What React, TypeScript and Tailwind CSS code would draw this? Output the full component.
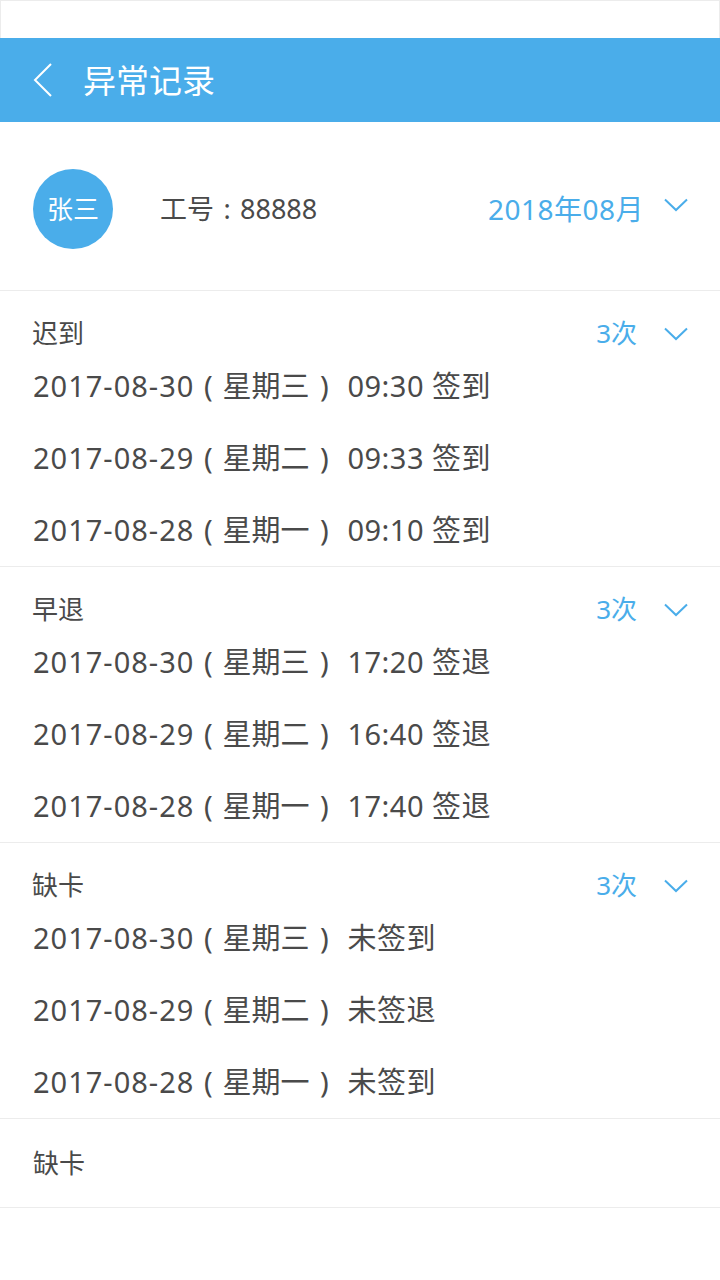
import React from "react";

const font = { fontFamily: '"Noto Sans", "Noto Sans CJK SC", sans-serif' };

type Item = { date: string; week: string; tail: string };
type Section = { title: string; count: string; items: Item[] };

const sections: Section[] = [
  {
    title: "迟到",
    count: "3次",
    items: [
      { date: "2017-08-30", week: "星期三", tail: "09:30 签到" },
      { date: "2017-08-29", week: "星期二", tail: "09:33 签到" },
      { date: "2017-08-28", week: "星期一", tail: "09:10 签到" },
    ],
  },
  {
    title: "早退",
    count: "3次",
    items: [
      { date: "2017-08-30", week: "星期三", tail: "17:20 签退" },
      { date: "2017-08-29", week: "星期二", tail: "16:40 签退" },
      { date: "2017-08-28", week: "星期一", tail: "17:40 签退" },
    ],
  },
  {
    title: "缺卡",
    count: "3次",
    items: [
      { date: "2017-08-30", week: "星期三", tail: "未签到" },
      { date: "2017-08-29", week: "星期二", tail: "未签退" },
      { date: "2017-08-28", week: "星期一", tail: "未签到" },
    ],
  },
];

function Chevron() {
  return (
    <svg width="24" height="14" viewBox="0 0 24 14" fill="none" className="shrink-0">
      <polyline points="1,1.5 12,12 23,1.5" stroke="#4aadea" strokeWidth="2" />
    </svg>
  );
}

export default function App() {
  return (
    <div className="w-[720px] min-h-[1280px] bg-white text-[#4a4a4a]" style={font}>
      {/* status strip */}
      <div className="h-[38px] border-t border-l border-r border-[#ececec]" />

      {/* title bar */}
      <div className="h-[84px] bg-[#4aadea] flex items-center pl-[33px]">
        <svg width="20" height="34" viewBox="0 0 20 34" fill="none">
          <polyline points="18,1 2,17 18,33" stroke="#ffffff" strokeWidth="2" />
        </svg>
        <span className="ml-[30px] text-[33px] leading-none text-white">异常记录</span>
      </div>

      {/* profile */}
      <div className="h-[168px] flex items-center pl-[33px] pr-[32px] pt-[6px]">
        <div className="w-[80px] h-[80px] rounded-full bg-[#4aadea] flex items-center justify-center text-white text-[26px]">
          张三
        </div>
        <div className="ml-[47px] text-[27px] flex items-center">
          工号<span className="inline-block w-[26px] text-center">:</span>88888
        </div>
        <div className="ml-auto flex items-center text-[28px] text-[#4aadea] tracking-[0.5px]">
          2018年08月
          <span className="ml-[20px] -mt-[8px] flex">
            <Chevron />
          </span>
        </div>
      </div>

      {sections.map((s) => (
        <div key={s.title} className="border-t border-[#ececec]">
          <div className="pt-[26px] h-[33px] box-content flex items-center pl-[32px] pr-[32px]">
            <span className="text-[26px]">{s.title}</span>
            <span className="ml-auto text-[26px] text-[#4aadea]">{s.count}</span>
            <span className="ml-[27px] flex">
              <Chevron />
            </span>
          </div>
          {s.items.map((it, i) => (
            <div key={i} className="h-[72px] flex items-center pl-[33px] text-[29px]">
              <span className="tracking-[1px]">{it.date}</span>
              <span className="inline-block w-[28px] text-center">(</span>
              {it.week}
              <span className="inline-block w-[30px] text-center">)</span>
              <span className="ml-[8px] tracking-[0.5px]">{it.tail}</span>
            </div>
          ))}
        </div>
      ))}

      <div className="h-[88px] box-content border-t border-b border-[#ececec] flex items-center pl-[33px] text-[26px]">
        缺卡
      </div>
    </div>
  );
}
